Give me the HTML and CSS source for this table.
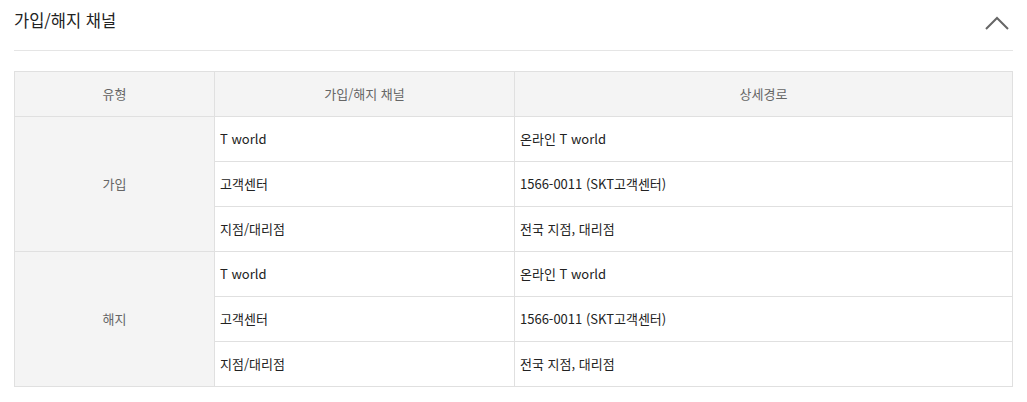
FILE: index.html
```html
<!DOCTYPE html>
<html lang="ko">
<head>
<meta charset="utf-8">
<link rel="stylesheet" href="styles.css">
</head>
<body>
<section class="panel">
  <div class="panel-head">
    <h2 class="panel-title">가입/해지 채널</h2>
    <button class="toggle" aria-label="접기">
      <svg width="24" height="14" viewBox="0 0 24 14"><polyline points="1,13 12,2 23,13" fill="none" stroke="#666" stroke-width="2"/></svg>
    </button>
  </div>
  <table class="channels">
    <colgroup><col class="c1"><col class="c2"><col class="c3"></colgroup>
    <thead>
      <tr><th>유형</th><th>가입/해지 채널</th><th>상세경로</th></tr>
    </thead>
    <tbody>
      <tr><th class="type" rowspan="3">가입</th><td>T world</td><td>온라인 T world</td></tr>
      <tr><td>고객센터</td><td>1566-0011 (SKT고객센터)</td></tr>
      <tr><td>지점/대리점</td><td>전국 지점, 대리점</td></tr>
      <tr><th class="type" rowspan="3">해지</th><td>T world</td><td>온라인 T world</td></tr>
      <tr><td>고객센터</td><td>1566-0011 (SKT고객센터)</td></tr>
      <tr><td>지점/대리점</td><td>전국 지점, 대리점</td></tr>
    </tbody>
  </table>
</section>
</body>
</html>
```
FILE: styles.css
```css
html, body {
  margin: 0;
  padding: 0;
  background: #fff;
}
body {
  font-family: "Noto Sans CJK KR", "Noto Sans", sans-serif;
  color: #222;
}
.panel {
  padding: 0 14px;
}
.panel-head {
  display: flex;
  justify-content: space-between;
  align-items: flex-start;
  border-bottom: 1px solid #e5e5e5;
  height: 50px;
  box-sizing: content-box;
}
.panel-title {
  margin: 0;
  padding-top: 9px;
  font-size: 16.5px;
  line-height: 22px;
  font-weight: 400;
  color: #222;
}
.toggle {
  margin: 16px 4px 0 0;
  padding: 0;
  border: 0;
  background: none;
  display: flex;
  width: 24px;
  height: 14px;
}
.channels {
  margin-top: 20px;
  width: 100%;
  border-collapse: collapse;
  font-size: 13px;
  line-height: 18px;
}
.c1 { width: 200px; }
.c2 { width: 300px; }
.channels th, .channels td {
  border: 1px solid #e0e0e0;
  height: 45px;
  padding: 0 5px;
  box-sizing: border-box;
}
.channels thead th {
  background: #f4f4f4;
  color: #666;
  font-weight: 400;
  text-align: center;
}
.channels th.type {
  background: #f4f4f4;
  color: #666;
  font-weight: 400;
  text-align: center;
}
.channels td {
  text-align: left;
  color: #222;
}
```
